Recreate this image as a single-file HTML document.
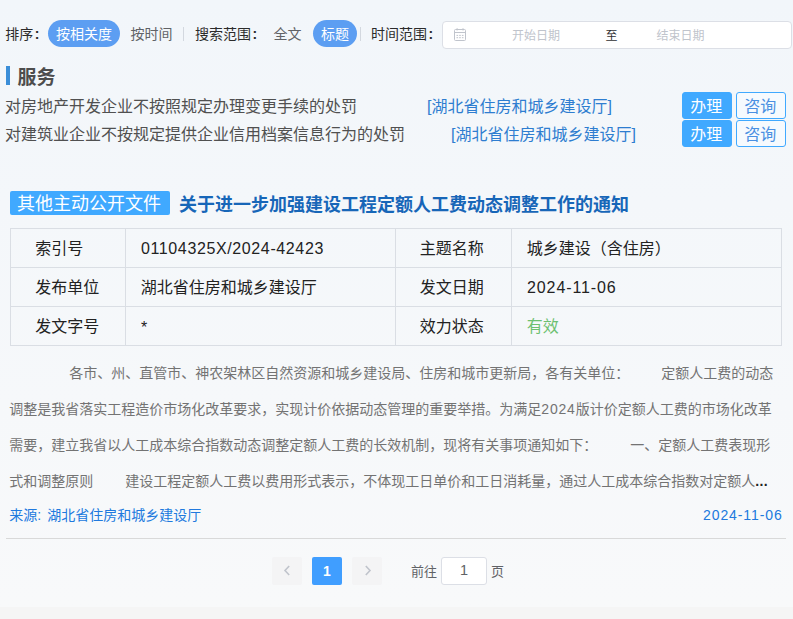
<!DOCTYPE html>
<html lang="zh-CN">
<head>
<meta charset="utf-8">
<title>搜索结果</title>
<style>
*{box-sizing:border-box;}
html,body{margin:0;padding:0;}
body{
  width:793px;height:619px;overflow:hidden;position:relative;
  font-family:"Liberation Sans","Noto Sans CJK SC",sans-serif;
  font-size:14px;color:#333;
  background:linear-gradient(180deg,#f2f6fa 0px,#f8f9fa 607px);
}
.abs{position:absolute;white-space:nowrap;}
/* filter bar */
.flt{top:20px;height:27px;line-height:29.8px;font-size:14px;}
.lbl{color:#2b2b2b;}
.cl{margin-left:1.5px;font-weight:bold;}
.opt{color:#606266;text-align:center;}
.pill{color:#fff;background:#5c9ef2;border-radius:14px;text-align:center;}
.vsep{width:1px;background:#d3d8df;top:27px;height:14px;}
.dbox{left:442px;top:21px;width:350px;height:28px;background:#fff;border:1px solid #dcdfe6;border-radius:4px;}
.dtxt{top:22px;height:28px;line-height:28px;font-size:12px;color:#c0c4cc;}
/* service */
.bar{left:6px;top:66px;width:4px;height:19px;background:#3b8ed8;}
.h2{left:17.5px;top:63.5px;height:28px;line-height:28px;font-size:19px;font-weight:bold;color:#4d4d4d;}
.srow{left:5px;width:781px;height:28px;line-height:28px;font-size:16px;display:flex;justify-content:space-between;align-items:center;color:#505050;}
.srow .lk{color:#2e7dd0;}
.srow>span{position:relative;top:1.2px;}
.srow>span.btns{top:0;}
.srow .btns{display:flex;width:104px;justify-content:space-between;}
.btn{width:50px;height:26.5px;line-height:28px;padding-right:1.4px;border-radius:3px;text-align:center;font-size:16px;border:1px solid #40a9ff;}
.btn.p{background:#40a9ff;color:#fff;}
.btn.o{background:#f6fafe;color:#4a90e2;}
/* doc */
.tag{left:10px;top:191px;width:160px;height:23.5px;line-height:26.5px;background:#40a9ff;color:#fff;font-size:18px;text-align:center;border-radius:2px;padding-right:2px;}
.ttl{left:179px;top:192.5px;height:24px;line-height:24px;font-size:18px;font-weight:bold;color:#1766b8;}
table{position:absolute;left:10px;top:228px;width:772px;border-collapse:collapse;table-layout:fixed;font-size:16px;color:#222;}
td{border:1px solid #dadee4;height:39px;padding:0 0 2px 0;white-space:nowrap;}
td.k{padding-left:24.2px;}
td.v{padding-left:15.2px;}
.lat{letter-spacing:.62px;position:relative;top:2px;left:.3px;}
.pl{left:9.3px;height:36px;line-height:36px;font-size:14px;color:#737373;margin-top:-0.6px;}
.sp{display:inline-block;width:32px;}
.src{left:9.3px;top:497.4px;height:36px;line-height:36px;font-size:14px;color:#2079de;}
.dt{right:10.4px;top:497.4px;height:36px;line-height:36px;font-size:14px;color:#2079de;letter-spacing:.9px;}
.hr{left:6px;top:538px;width:780px;height:1px;background:#d9d9d9;}
/* pagination */
.pg{top:557px;height:28px;line-height:28px;font-size:13px;text-align:center;}
.pb{width:30px;background:#f4f4f5;border-radius:2px;color:#c0c4cc;}
.pa{width:30px;background:#409eff;border-radius:2px;color:#fff;font-weight:bold;font-size:14px;}
.pin{left:441px;width:46px;background:#fff;border:1px solid #dcdfe6;border-radius:3px;color:#606266;line-height:25.5px;font-size:14.5px;}
.foot{left:0;top:607px;width:793px;height:12px;background:#f5f5f5;}
</style>
</head>
<body>
<!-- filter bar -->
<div class="abs flt lbl" style="left:5.3px;">排序<span class="cl">:</span></div>
<div class="abs flt pill" style="left:48px;width:72px;">按相关度</div>
<div class="abs flt opt" style="left:122.4px;width:58px;">按时间</div>
<div class="abs vsep" style="left:183px;"></div>
<div class="abs flt lbl" style="left:195px;">搜索范围<span class="cl">:</span></div>
<div class="abs flt opt" style="left:265.4px;width:44px;">全文</div>
<div class="abs flt pill" style="left:313px;width:44px;">标题</div>
<div class="abs vsep" style="left:359.5px;"></div>
<div class="abs flt lbl" style="left:371px;">时间范围<span class="cl">:</span></div>
<div class="abs dbox"></div>
<svg class="abs" style="left:454px;top:28px;" width="12" height="13" viewBox="0 0 12 13" fill="none" stroke="#c0c4cc" stroke-width="1">
  <rect x="0.5" y="1.5" width="11" height="11" rx="1"/>
  <line x1="0.5" y1="4.5" x2="11.5" y2="4.5"/>
  <line x1="3.1" y1="0.2" x2="3.1" y2="2.5"/>
  <line x1="9" y1="0.2" x2="9" y2="2.5"/>
  <path d="M2.5 7.4h1.6M5.2 7.4h1.6M7.9 7.4h1.6M2.5 9.7h1.6M5.2 9.7h1.6M7.9 9.7h1.6"/>
</svg>
<div class="abs dtxt" style="left:512px;">开始日期</div>
<div class="abs dtxt" style="left:605.5px;color:#303133;">至</div>
<div class="abs dtxt" style="left:656.5px;">结束日期</div>

<!-- service -->
<div class="abs bar"></div>
<div class="abs h2">服务</div>
<div class="abs srow" style="top:91.5px;">
  <span>对房地产开发企业不按照规定办理变更手续的处罚</span>
  <span class="lk">[湖北省住房和城乡建设厅]</span>
  <span class="btns"><span class="btn p">办理</span><span class="btn o">咨询</span></span>
</div>
<div class="abs srow" style="top:119.7px;">
  <span>对建筑业企业不按规定提供企业信用档案信息行为的处罚</span>
  <span class="lk">[湖北省住房和城乡建设厅]</span>
  <span class="btns"><span class="btn p">办理</span><span class="btn o">咨询</span></span>
</div>

<!-- document -->
<div class="abs tag">其他主动公开文件</div>
<div class="abs ttl">关于进一步加强建设工程定额人工费动态调整工作的通知</div>
<table>
  <colgroup><col style="width:114.5px"><col style="width:270px"><col style="width:116px"><col></colgroup>
  <tr><td class="k">索引号</td><td class="v"><span class="lat">01104325X/2024-42423</span></td><td class="k">主题名称</td><td class="v">城乡建设（含住房）</td></tr>
  <tr><td class="k">发布单位</td><td class="v">湖北省住房和城乡建设厅</td><td class="k">发文日期</td><td class="v"><span class="lat" style="letter-spacing:.9px">2024-11-06</span></td></tr>
  <tr><td class="k">发文字号</td><td class="v"><span class="lat" style="top:3px">*</span></td><td class="k">效力状态</td><td class="v" style="color:#6cc070;">有效</td></tr>
</table>

<div class="abs pl" style="top:356px;padding-left:60px;">各市、州、直管市、神农架林区自然资源和城乡建设局、住房和城市更新局，各有关单位：<span class="sp"></span>定额人工费的动态</div>
<div class="abs pl" style="top:392px;">调整是我省落实工程造价市场化改革要求，实现计价依据动态管理的重要举措。为满足<span style="letter-spacing:.8px">2024</span>版计价定额人工费的市场化改革</div>
<div class="abs pl" style="top:428px;">需要，建立我省以人工成本综合指数动态调整定额人工费的长效机制，现将有关事项通知如下：<span class="sp" style="width:33px"></span>一、定额人工费表现形</div>
<div class="abs pl" style="top:464px;">式和调整原则<span class="sp"></span>建设工程定额人工费以费用形式表示，不体现工日单价和工日消耗量，通过人工成本综合指数对定额人<span style="color:#222;font-weight:bold;letter-spacing:.3px">...</span></div>

<div class="abs src">来源:<span style="display:inline-block;width:6px"></span>湖北省住房和城乡建设厅</div>
<div class="abs dt">2024-11-06</div>
<div class="abs hr"></div>

<!-- pagination -->
<div class="abs pg pb" style="left:272px;"><svg width="8" height="11" viewBox="0 0 8 11" style="vertical-align:-1px;position:relative;top:-.5px;left:-.5px"><path d="M6.2 1 L2 5.5 L6.2 10" fill="none" stroke="#c0c4cc" stroke-width="1.6"/></svg></div>
<div class="abs pg pa" style="left:312px;">1</div>
<div class="abs pg pb" style="left:352px;"><svg width="8" height="11" viewBox="0 0 8 11" style="vertical-align:-1px;position:relative;top:-.5px;left:.5px"><path d="M1.8 1 L6 5.5 L1.8 10" fill="none" stroke="#c0c4cc" stroke-width="1.6"/></svg></div>
<div class="abs pg" style="left:411px;color:#606266;line-height:30px;">前往</div>
<div class="abs pg pin">1</div>
<div class="abs pg" style="left:491px;color:#606266;line-height:30px;">页</div>
<div class="abs foot"></div>
</body>
</html>
